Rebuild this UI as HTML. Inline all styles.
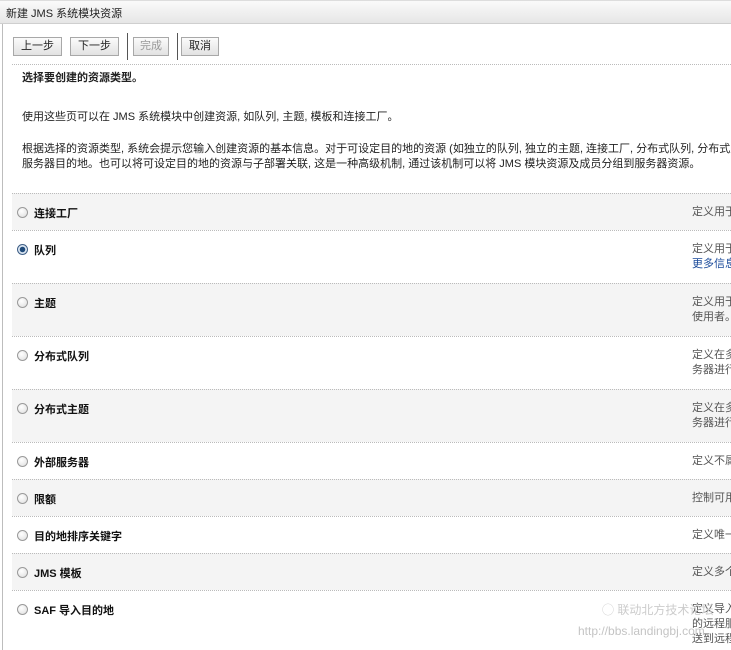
<!DOCTYPE html>
<html><head><meta charset="utf-8">
<style>
*{margin:0;padding:0;box-sizing:border-box}
html,body{width:731px;height:650px;overflow:hidden;background:#fff}
body{position:relative;font-family:"Liberation Sans","Noto Sans CJK SC","WenQuanYi Zen Hei",sans-serif;font-size:11px;color:#222}
.t{position:absolute;white-space:nowrap;line-height:15px}
#title{position:absolute;left:0;top:0;width:731px;height:24px;background:linear-gradient(#fafafa,#e6e6e6);border-bottom:1px solid #cfcfcf;border-top:1px solid #ddd}
#title span{position:absolute;left:6px;top:4px;font-size:11px;color:#222}
#lb{position:absolute;left:2px;top:24px;width:1px;height:626px;background:#bdbdbd}
.btn{position:absolute;top:37px;height:19px;border:1px solid #a8a8a8;background:linear-gradient(#fbfbfb,#e2e2e2);font-size:11px;text-align:center;line-height:17px;color:#222}
.sep{position:absolute;top:33px;width:1px;height:27px;background:#555}
.dot{position:absolute;left:12px;width:719px;border-top:1px dotted #bbb;height:0}
.row{position:absolute;left:12px;width:719px}
.g{background:#f4f4f4}
.r{position:absolute;left:17px;width:11px;height:11px;border-radius:50%;border:1px solid #9a9a9a;background:radial-gradient(circle at 40% 35%,#fff,#ddd)}
.r.on{border-color:#3f5f86;background:radial-gradient(circle,#1f4a7a 0 2.5px,#dbe6f2 3px)}
.lab{position:absolute;left:34px;font-weight:bold;font-size:11px;white-space:nowrap;color:#111}
.d{position:absolute;left:692px;color:#555;white-space:nowrap;line-height:15px;font-size:11px}
a{color:#1a4a9a;text-decoration:none}
</style></head><body>
<div id="title"><span>新建 JMS 系统模块资源</span></div>
<div id="lb"></div>
<div class="btn" style="left:13px;width:49px">上一步</div>
<div class="btn" style="left:70px;width:49px">下一步</div>
<div class="sep" style="left:127px"></div>
<div class="btn" style="left:133px;width:36px;color:#999">完成</div>
<div class="sep" style="left:177px"></div>
<div class="btn" style="left:181px;width:38px">取消</div>
<div class="dot" style="top:64px"></div>
<div class="t" style="left:22px;top:71px;font-weight:bold">选择要创建的资源类型。</div>
<div class="t" style="left:22px;top:110px">使用这些页可以在 JMS 系统模块中创建资源, 如队列, 主题, 模板和连接工厂。</div>
<div class="t" style="left:22px;top:142px">根据选择的资源类型, 系统会提示您输入创建资源的基本信息。对于可设定目的地的资源 (如独立的队列, 独立的主题, 连接工厂, 分布式队列, 分布式主题</div>
<div class="t" style="left:22px;top:157px">服务器目的地。也可以将可设定目的地的资源与子部署关联, 这是一种高级机制, 通过该机制可以将 JMS 模块资源及成员分组到服务器资源。</div>

<div class="row g" style="top:193px;height:37px"></div>
<div class="row g" style="top:283px;height:53px"></div>
<div class="row g" style="top:389px;height:53px"></div>
<div class="row g" style="top:479px;height:37px"></div>
<div class="row g" style="top:553px;height:37px"></div>
<div class="dot" style="top:193px"></div>
<div class="dot" style="top:230px"></div>
<div class="dot" style="top:283px"></div>
<div class="dot" style="top:336px"></div>
<div class="dot" style="top:389px"></div>
<div class="dot" style="top:442px"></div>
<div class="dot" style="top:479px"></div>
<div class="dot" style="top:516px"></div>
<div class="dot" style="top:553px"></div>
<div class="dot" style="top:590px"></div>

<div class="r" style="top:207px"></div><div class="lab" style="top:205px">连接工厂</div><div class="d" style="top:205px">定义用于</div>
<div class="r on" style="top:244px"></div><div class="lab" style="top:242px">队列</div><div class="d" style="top:242px">定义用于<br><a>更多信息</a></div>
<div class="r" style="top:297px"></div><div class="lab" style="top:295px">主题</div><div class="d" style="top:295px">定义用于<br>使用者。</div>
<div class="r" style="top:350px"></div><div class="lab" style="top:348px">分布式队列</div><div class="d" style="top:348px">定义在多<br>务器进行</div>
<div class="r" style="top:403px"></div><div class="lab" style="top:401px">分布式主题</div><div class="d" style="top:401px">定义在多<br>务器进行</div>
<div class="r" style="top:456px"></div><div class="lab" style="top:454px">外部服务器</div><div class="d" style="top:454px">定义不属</div>
<div class="r" style="top:493px"></div><div class="lab" style="top:491px">限额</div><div class="d" style="top:491px">控制可用</div>
<div class="r" style="top:530px"></div><div class="lab" style="top:528px">目的地排序关键字</div><div class="d" style="top:528px">定义唯一</div>
<div class="r" style="top:567px"></div><div class="lab" style="top:565px">JMS 模板</div><div class="d" style="top:565px">定义多个</div>
<div class="r" style="top:604px"></div><div class="lab" style="top:602px">SAF 导入目的地</div><div class="d" style="top:602px">定义导入<br>的远程服<br>送到远程</div>
<div class="t" style="left:602px;top:603px;color:#ccc;font-size:12px">◯ 联动北方技术论坛</div>
<div class="t" style="left:578px;top:624px;color:#c4c4c4;font-size:12px">http://bbs.landingbj.com</div>
</body></html>
